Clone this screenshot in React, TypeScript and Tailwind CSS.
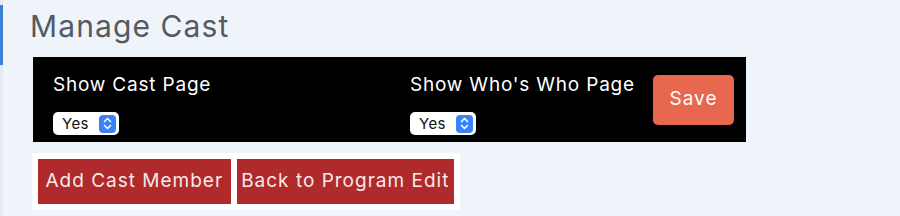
import React from "react";

function FakeSelect() {
  return (
    <div className="flex h-[23px] w-[66px] items-center justify-between rounded-[5px] bg-white pl-[9px] pr-[3px]">
      <span className="text-[15px] leading-none tracking-[0.4px] text-[#111]">Yes</span>
      <span className="flex h-[18px] w-[17px] items-center justify-center rounded-[4px] bg-[#3a82f7]">
        <svg width="9" height="13" viewBox="0 0 9 13" fill="none">
          <path d="M1.5 4.5 L4.5 1.5 L7.5 4.5" stroke="white" strokeWidth="1.6" strokeLinecap="round" strokeLinejoin="round" />
          <path d="M1.5 8.5 L4.5 11.5 L7.5 8.5" stroke="white" strokeWidth="1.6" strokeLinecap="round" strokeLinejoin="round" />
        </svg>
      </span>
    </div>
  );
}

export default function App() {
  return (
    <div
      className="flex h-[216px] w-[900px] bg-[#eff3fa]"
      style={{ fontFamily: "Inter, 'Noto Sans', sans-serif" }}
    >
      <div className="flex w-[3px] flex-col bg-[#e6eaf2]">
        <div className="mt-[5px] h-[60px] w-[3px] bg-[#3d7fd6]" />
      </div>
      <div className="flex flex-col pl-[27px]">
        <h1 className="mt-[6px] h-[40px] text-[30px] leading-[40px] tracking-[1.1px] text-[#555a61]">Manage Cast</h1>
        <div className="mt-[11px] ml-[3px] flex h-[85px] w-[713px] items-center bg-black pl-[20px]">
          <div className="flex w-[357px] flex-col self-stretch pt-[17px]">
            <span className="text-[19px] leading-[22px] tracking-[0.8px] text-white">Show Cast Page</span>
            <div className="mt-[16px]">
              <FakeSelect />
            </div>
          </div>
          <div className="flex w-[243px] flex-col self-stretch pt-[17px]">
            <span className="text-[19px] leading-[22px] tracking-[0.8px] text-white">Show Who's Who Page</span>
            <div className="mt-[16px]">
              <FakeSelect />
            </div>
          </div>
          <button className="flex h-[50px] w-[81px] items-center justify-center rounded-[5px] bg-[#e8674f] text-[19px] tracking-[1px] text-white">
            Save
          </button>
        </div>
        <div className="mt-[11px] ml-[2px] flex w-[428px] gap-[6px] bg-white p-[6px]">
          <button className="flex h-[45px] w-[193px] items-center justify-center bg-[#b02a2b] text-[19px] tracking-[1px] text-[#f6e9e9]">
            Add Cast Member
          </button>
          <button className="flex h-[45px] w-[218px] items-center justify-center bg-[#b02a2b] text-[19px] tracking-[1px] text-[#f6e9e9]">
            Back to Program Edit
          </button>
        </div>
      </div>
    </div>
  );
}
